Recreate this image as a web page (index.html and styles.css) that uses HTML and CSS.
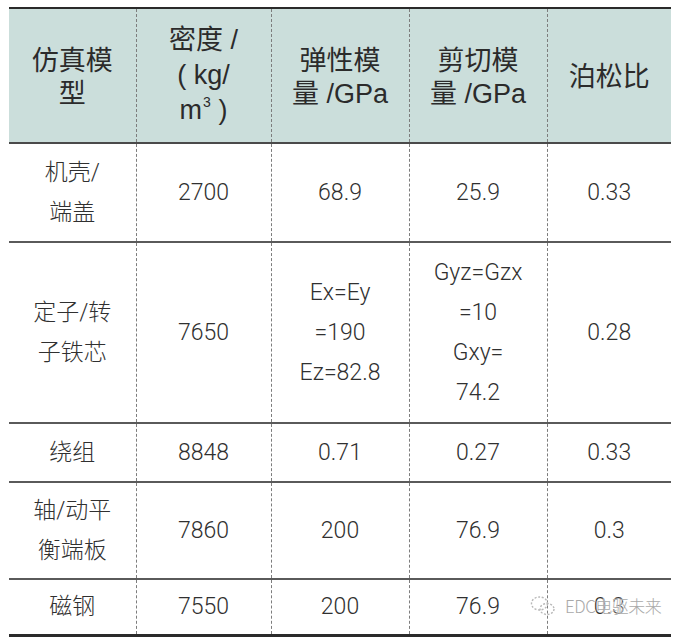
FILE: index.html
```html
<!DOCTYPE html>
<html lang="zh">
<head>
<meta charset="utf-8">
<link rel="stylesheet" href="styles.css">
</head>
<body>
<div class="page">
  <table class="props">
    <colgroup>
      <col class="c1"><col class="c2"><col class="c3"><col class="c4"><col class="c5">
    </colgroup>
    <thead>
      <tr class="head">
        <th>仿真模<br>型</th>
        <th class="tight">密度 /<br>( kg/<br>m<sup>3</sup> )</th>
        <th>弹性模<br>量 /GPa</th>
        <th>剪切模<br>量 /GPa</th>
        <th>泊松比</th>
      </tr>
    </thead>
    <tbody>
      <tr class="r1">
        <td>机壳/<br>端盖</td><td>2700</td><td>68.9</td><td>25.9</td><td>0.33</td>
      </tr>
      <tr class="r2">
        <td>定子/转<br>子铁芯</td><td>7650</td><td>Ex=Ey<br>=190<br>Ez=82.8</td><td>Gyz=Gzx<br>=10<br>Gxy=<br>74.2</td><td>0.28</td>
      </tr>
      <tr class="r3">
        <td>绕组</td><td>8848</td><td>0.71</td><td>0.27</td><td>0.33</td>
      </tr>
      <tr class="r4">
        <td>轴/动平<br>衡端板</td><td>7860</td><td>200</td><td>76.9</td><td>0.3</td>
      </tr>
      <tr class="r5">
        <td>磁钢</td><td>7550</td><td>200</td><td>76.9</td><td>0.3</td>
      </tr>
    </tbody>
  </table>
  <div class="mark">
    <svg class="mark-icon" width="26" height="22" viewBox="0 0 26 22">
      <g fill="none" stroke="#b8b8b8" stroke-width="1.4" stroke-dasharray="2 1.6">
        <ellipse cx="9.5" cy="8.5" rx="8" ry="6.5"/>
        <ellipse cx="17" cy="14" rx="7" ry="5.5"/>
      </g>
    </svg>
    <span class="mark-text">EDC电驱未来</span>
  </div>
</div>
</body>
</html>
```

FILE: styles.css
```css
html, body {
  margin: 0;
  padding: 0;
  background: #ffffff;
}

.page {
  position: relative;
  width: 678px;
  height: 644px;
  padding: 7px 0 0 9px;
  box-sizing: border-box;
}

.props {
  width: 662px;
  border-collapse: collapse;
  table-layout: fixed;
  font-family: "Roboto", "Liberation Sans", "Noto Sans CJK SC", sans-serif;
  color: #303030;
  border-top: 2px solid #2a2a2a;
  border-bottom: 3px solid #2a2a2a;
}

.c1 { width: 127px; }
.c2 { width: 135px; }
.c3 { width: 138px; }
.c4 { width: 138px; }
.c5 { width: 124px; }

.props th,
.props td {
  padding: 0;
  text-align: center;
  vertical-align: middle;
  border-left: 1px dashed #7d7d7d;
}

.props th:first-child,
.props td:first-child {
  border-left: none;
}

.props th {
  background: #cbdedb;
  font-family: "Liberation Sans", "Noto Sans CJK SC", sans-serif;
  font-weight: 400;
  font-size: 27px;
  line-height: 33px;
  color: #2b2b2b;
  border-bottom: 2px solid #4a4a4a;
  padding-top: 4px;
}

.props th.tight {
  line-height: 35px;
  padding-top: 0;
}

.props th sup {
  font-size: 14px;
  line-height: 0;
  vertical-align: 12px;
  margin-left: 1px;
}

.props td {
  font-size: 23px;
  font-weight: 300;
  line-height: 40px;
  border-top: 2px solid #5a5a5a;
}

.props tbody tr:first-child td {
  border-top: none;
}

.head { height: 135px; }
.r1 { height: 99px; }
.r2 { height: 181px; }
.r3 { height: 59px; }
.r4 { height: 97px; }
.r5 { height: 56px; }

.mark {
  position: absolute;
  left: 530px;
  top: 593px;
  display: flex;
  align-items: center;
  gap: 9px;
}

.mark-text {
  font-family: "Noto Sans CJK SC", "Liberation Sans", sans-serif;
  font-size: 17px;
  font-weight: 300;
  color: #a9a9a9;
  letter-spacing: -0.5px;
  text-shadow: 0 0 2px #ffffff, 0 0 2px #ffffff;
}
```
